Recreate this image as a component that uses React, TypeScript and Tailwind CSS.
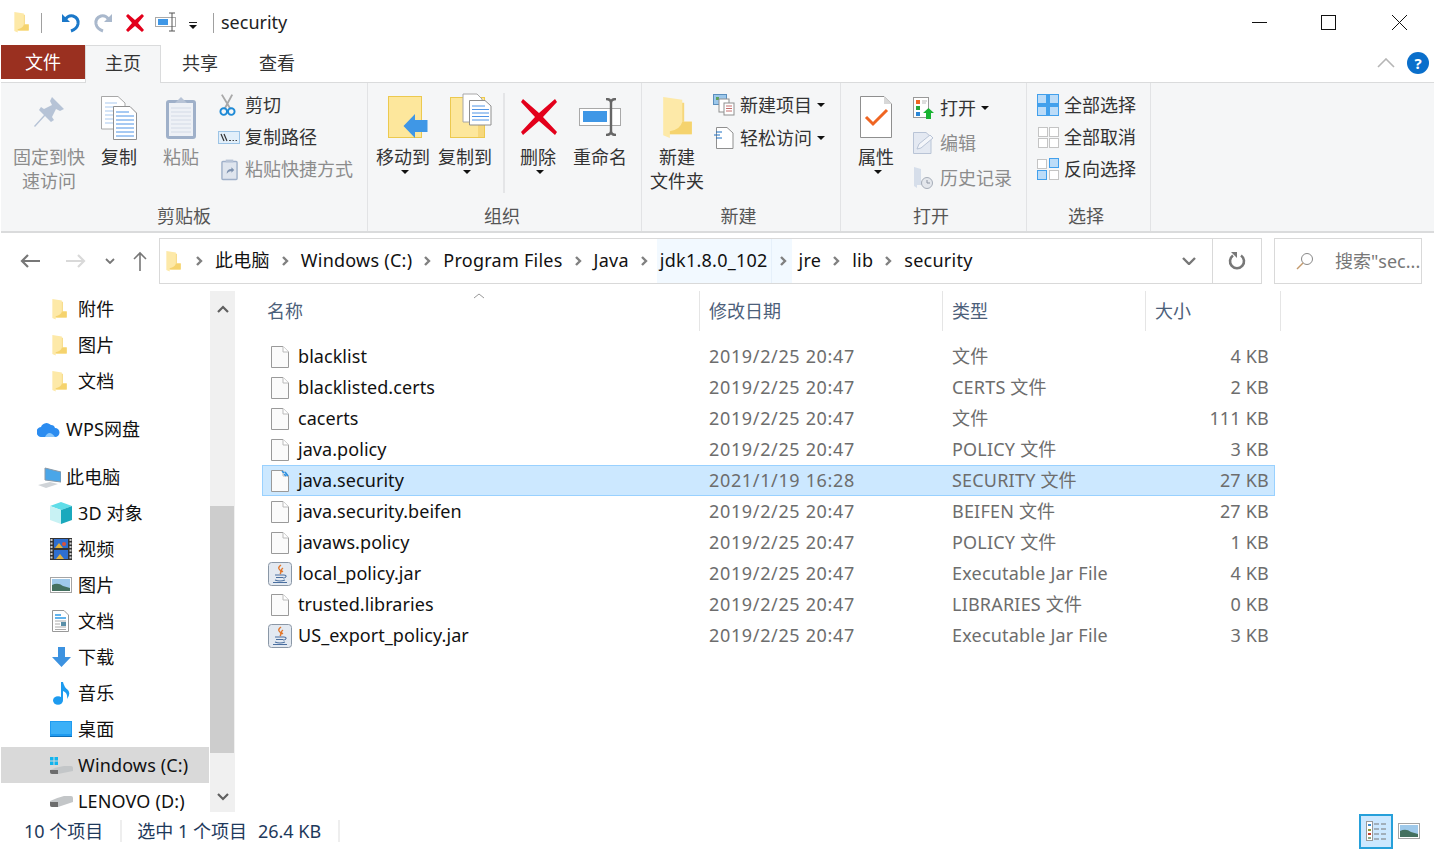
import type { ReactNode } from "react";

const font = "font-['Noto_Sans','Noto_Sans_CJK_SC',sans-serif]";

function Folder({ className }: { className: string }) {
  return (
    <svg viewBox="0 0 15 22" className={className}>
      <path d="M5 3 H11 V13 H15 V19 H5 Z" fill="#f6d77c" />
      <path d="M0 0 L10 1.5 V13 H15 V19.5 H3.5 L3.5 21.5 L0 20 Z" fill="#fde9a8" />
      <path d="M10 13 H15 V19.5 H3.5 V18 Q9 17 10 13 Z" fill="#f5d36e" />
    </svg>
  );
}

function Pages({ className }: { className: string }) {
  return (
    <svg viewBox="0 0 36 44" className={className}>
      <path d="M.5.5 H17 L24 7 V33 H.5 Z" fill="#fff" stroke="#a8a8a8" />
      <path d="M4 7 H16 M4 11 H20 M4 15 H20 M4 19 H20 M4 23 H20 M4 27 H20" stroke="#a9c9ef" />
      <path d="M12.5 10.5 H29 L35.5 17 V43.5 H12.5 Z" fill="#fff" stroke="#8f8f8f" />
      <path d="M15 16 H28 M15 20 H33 M15 24 H33 M15 28 H33 M15 32 H33 M15 36 H33 M15 40 H33" stroke="#4f94e6" />
    </svg>
  );
}

function Clipboard({ className }: { className: string }) {
  return (
    <svg viewBox="0 0 32 44" className={className}>
      <rect x="1" y="4" width="30" height="39" rx="3" fill="#9fb0c9" />
      <rect x="4" y="7" width="24" height="33" fill="#eef1f6" />
      <path d="M6 12 H26 M6 16 H26 M6 20 H26 M6 24 H26 M6 28 H26 M6 32 H26 M6 36 H26" stroke="#d3dae6" />
      <path d="M10 7 L13 4 L16 1 L19 4 L22 7 Z" fill="#b7c3d6" />
    </svg>
  );
}

function Caret({ className = "" }: { className?: string }) {
  return (
    <svg viewBox="0 0 8 4" className={`h-[4px] w-[8px] ${className}`}>
      <path d="M0 0 H8 L4 4 Z" fill="#111" />
    </svg>
  );
}

function LargeButton({
  icon,
  lines,
  width,
  caret,
  disabled,
}: {
  icon: ReactNode;
  lines: string[];
  width: string;
  caret?: boolean;
  disabled?: boolean;
}) {
  return (
    <div className={`flex flex-col items-center ${width}`}>
      <div className="flex h-[62px] w-full items-start justify-center pt-[13px]">{icon}</div>
      {lines.map((l) => (
        <div key={l} className={`h-[24px] whitespace-nowrap text-[18px] leading-[24px] ${disabled ? "text-[#8c8c8c]" : "text-[#333]"}`}>
          {l}
        </div>
      ))}
      {caret && <Caret className="ml-[3px] mt-[1px]" />}
    </div>
  );
}

function SmallButton({
  icon,
  label,
  caret,
  disabled,
  height = "h-[32px]",
}: {
  icon: ReactNode;
  label: string;
  caret?: boolean;
  disabled?: boolean;
  height?: string;
}) {
  return (
    <div className={`flex items-center ${height}`}>
      <div className="flex w-[27px] shrink-0 items-center justify-start">{icon}</div>
      <span className={`whitespace-nowrap text-[18px] leading-[24px] ${disabled ? "text-[#8c8c8c]" : "text-[#333]"}`}>{label}</span>
      {caret && <Caret className="ml-[5px]" />}
    </div>
  );
}

function Group({ label, width, labelPad = "", children }: { label: string; width: string; labelPad?: string; children: ReactNode }) {
  return (
    <div className={`flex h-full shrink-0 flex-col border-r border-[#e2e3e5] ${width}`}>
      <div className="flex flex-1">{children}</div>
      <div className={`h-[30px] text-center text-[18px] leading-[30px] text-[#555] ${labelPad}`}>{label}</div>
    </div>
  );
}

function SelectIcon({ kind }: { kind: "all" | "none" | "invert" }) {
  const on = "#bcdcf8";
  const blue = "#42a0ec";
  const gray = "#c4c4c4";
  const cell = (x: number, y: number, active: boolean) => (
    <rect x={x + 0.5} y={y + 0.5} width="9" height="9" fill={active ? on : "#fff"} stroke={active ? blue : gray} />
  );
  return (
    <svg viewBox="0 0 22 22" className="h-[22px] w-[22px]">
      {kind === "all" && (
        <>
          {cell(0, 0, true)}
          {cell(12, 0, true)}
          {cell(0, 12, true)}
          {cell(12, 12, true)}
          <path d="M11 0 V22 M0 11 H22" stroke={blue} strokeWidth="2" />
        </>
      )}
      {kind === "none" && (
        <>
          {cell(1, 1, false)}
          {cell(12, 1, false)}
          {cell(1, 12, false)}
          {cell(12, 12, false)}
        </>
      )}
      {kind === "invert" && (
        <>
          {cell(0, 1, false)}
          {cell(12, 0, true)}
          {cell(0, 12, true)}
          {cell(12, 12, false)}
        </>
      )}
    </svg>
  );
}

function Ribbon() {
  return (
    <div className="mx-[1px] flex h-[151px] border-y border-b-2 border-[#dadbdc] bg-[#f5f6f7]">
      <Group label="剪贴板" width="w-[367px]">
        <div className="flex pl-[12px]">
          <LargeButton
            width="w-[72px]"
            disabled
            lines={["固定到快", "速访问"]}
            icon={
              <svg viewBox="0 0 32 32" className="h-[32px] w-[32px]">
                <path d="M19 1 L31 13 L27 15 L23 13 L19 21 L21 24 L18 26 L12 20 L2 31 L1 30 L11 19 L6 14 L8 11 L11 13 L19 9 L17 5 Z" fill="#b6c3d6" />
              </svg>
            }
          />
          <LargeButton width="w-[68px]" lines={["复制"]} icon={<Pages className="h-[44px] w-[36px]" />} />
          <LargeButton width="w-[56px]" disabled lines={["粘贴"]} icon={<Clipboard className="h-[44px] w-[32px]" />} />
          <div className="ml-[9px] flex flex-col pt-[6px]">
            <SmallButton
              label="剪切"
              icon={
                <svg viewBox="0 0 18 24" className="ml-[1px] h-[24px] w-[17px]">
                  <path d="M3 1 L12 16 M14 1 L6 16" stroke="#a9a9a9" strokeWidth="2" fill="none" />
                  <circle cx="5" cy="19" r="3.5" fill="none" stroke="#1e8ad6" strokeWidth="2" />
                  <circle cx="13" cy="19" r="3.5" fill="none" stroke="#1e8ad6" strokeWidth="2" />
                </svg>
              }
            />
            <SmallButton
              label="复制路径"
              icon={
                <svg viewBox="0 0 22 13" className="h-[13px] w-[22px]">
                  <rect x=".5" y=".5" width="21" height="12" fill="#e2effa" stroke="#9cc4e6" />
                  <path d="M3 3 L6 10 M6 3 L9 10" stroke="#333" strokeWidth="1.2" />
                  <path d="M11 9.5 H13 M14.5 9.5 H16 M17.5 9.5 H19" stroke="#444" />
                </svg>
              }
            />
            <SmallButton
              label="粘贴快捷方式"
              disabled
              icon={
                <svg viewBox="0 0 18 23" className="ml-[3px] h-[23px] w-[17px]">
                  <rect x="1" y="3" width="16" height="19" rx="1" fill="#dfe5ee" stroke="#9fb0c9" strokeWidth="1.5" />
                  <rect x="5" y="1" width="8" height="3" fill="#b7c3d6" />
                  <path d="M6 16 Q6 11 11 11 V9 L14 12 L11 15 V13 Q8 13 6 16 Z" fill="#7f93b0" />
                </svg>
              }
            />
          </div>
        </div>
      </Group>
      <Group label="组织" width="w-[274px]" labelPad="pr-[5px]">
        <div className="flex pl-[8px]">
          <LargeButton
            width="w-[54px]"
            caret
            lines={["移动到"]}
            icon={
              <svg viewBox="0 0 40 44" className="ml-[10px] h-[44px] w-[40px] shrink-0">
                <rect x=".5" y=".5" width="33" height="41" fill="#fde79c" stroke="#ecc94f" />
                <path d="M39.5 24 H27 V18 L15.5 30 L27 42 V36 H39.5 Z" fill="#3f97e6" />
              </svg>
            }
          />
          <LargeButton
            width="w-[70px]"
            caret
            lines={["复制到"]}
            icon={
              <svg viewBox="0 0 42 46" className="-mt-[3px] ml-[12px] h-[46px] w-[42px] shrink-0">
                <rect x=".5" y="4.5" width="34" height="40" fill="#fde79c" stroke="#ecc94f" />
                <rect x="28" y="30" width="6" height="14" fill="#f6d77c" />
                <path d="M13 1 H27 L32 6 V29 H13 Z" fill="#fff" stroke="#a8a8a8" />
                <path d="M19.5 7.5 H35 L41 13 V32 H19.5 Z" fill="#fff" stroke="#8f8f8f" />
                <path d="M22 13 H35 M22 16.5 H39 M22 20 H39 M22 23.5 H39 M22 27 H39" stroke="#4f94e6" />
              </svg>
            }
          />
          <div className="ml-[3px] mt-[10px] h-[100px] w-[2px] bg-[#e4e5e7]" />
          <LargeButton
            width="w-[66px]"
            caret
            lines={["删除"]}
            icon={
              <svg viewBox="0 0 38 38" className="ml-[2px] mt-[2px] h-[38px] w-[38px] shrink-0">
                <path d="M3 1 L19 15 L35 1 L37 4 L23 19 L37 34 L35 37 L19 23 L3 37 L1 34 L15 19 L1 4 Z" fill="#e3001b" />
              </svg>
            }
          />
          <LargeButton
            width="w-[58px]"
            lines={["重命名"]}
            icon={
              <svg viewBox="0 0 42 38" className="mt-[2px] h-[38px] w-[42px] shrink-0">
                <rect x=".5" y="10.5" width="41" height="17" fill="#fff" stroke="#a9a9a9" />
                <rect x="4" y="13" width="24" height="11" fill="#3f97e6" />
                <path d="M27 1 Q32 1 32 5 V33 Q32 37 37 37 M37 1 Q32 1 32 5 M32 33 Q32 37 27 37" stroke="#666" strokeWidth="2.4" fill="none" />
              </svg>
            }
          />
        </div>
      </Group>
      <Group label="新建" width="w-[199px]" labelPad="pr-[5px]">
        <div className="flex pl-[8px]">
          <LargeButton width="w-[54px]" lines={["新建", "文件夹"]} icon={<Folder className="mt-[1px] h-[42px] w-[29px]" />} />
          <div className="ml-[9px] flex flex-col pt-[6px]">
            <SmallButton
              label="新建项目"
              caret
              icon={
                <svg viewBox="0 0 22 22" className="h-[22px] w-[22px]">
                  <rect x=".5" y=".5" width="13" height="10" fill="#9cc7ea" stroke="#5b8fbd" />
                  <rect x="3" y="3" width="3" height="3" fill="#5da35d" />
                  <rect x="6" y="5" width="10" height="13" fill="#fff" stroke="#8f8f8f" />
                  <rect x="11" y="9" width="10" height="12" fill="#fff" stroke="#8f8f8f" />
                  <path d="M13 12 H19 M13 14.5 H19 M13 17 H19" stroke="#c56e6e" />
                </svg>
              }
            />
            <SmallButton
              label="轻松访问"
              caret
              height="h-[34px]"
              icon={
                <svg viewBox="0 0 21 22" className="h-[22px] w-[21px]">
                  <path d="M3.5 .5 H14 L20 6 V21.5 H3.5 Z" fill="#fff" stroke="#8f8f8f" />
                  <path d="M3 5 H9 M1 8 H7 M3 11 H9" stroke="#1b6fc2" />
                </svg>
              }
            />
          </div>
        </div>
      </Group>
      <Group label="打开" width="w-[186px]" labelPad="pr-[5px]">
        <div className="flex pl-[13px]">
          <LargeButton
            width="w-[44px]"
            caret
            lines={["属性"]}
            icon={
              <svg viewBox="0 0 32 42" className="h-[42px] w-[32px]">
                <path d="M.5.5 H24 L31.5 8 V41.5 H.5 Z" fill="#fff" stroke="#8f8f8f" />
                <path d="M24 .5 V8 H31.5 Z" fill="#d8d8d8" />
                <path d="M6 21 L13 28 L27 14" stroke="#ef6522" strokeWidth="3" fill="none" />
              </svg>
            }
          />
          <div className="ml-[15px] flex flex-col pt-[7px]">
            <SmallButton
              label="打开"
              caret
              height="h-[35px]"
              icon={
                <svg viewBox="0 0 21 22" className="h-[22px] w-[21px]">
                  <rect x=".5" y=".5" width="15" height="20" fill="#fff" stroke="#999" />
                  <rect x="3" y="3" width="4" height="4" fill="#ef6522" />
                  <rect x="3" y="9" width="4" height="4" fill="#27a53a" />
                  <rect x="3" y="15" width="4" height="4" fill="#2a86d6" />
                  <path d="M9 4 H14 M9 6 H13" stroke="#bbb" />
                  <path d="M15.5 11 L21 16 H18 V22 H13 V16 H10 Z" fill="#19b332" />
                </svg>
              }
            />
            <SmallButton
              label="编辑"
              disabled
              height="h-[35px]"
              icon={
                <svg viewBox="0 0 21 22" className="h-[22px] w-[21px]">
                  <path d="M.5 .5 H13 L18 5 V21.5 H.5 Z" fill="#e4e9f2" stroke="#b9c4d6" />
                  <path d="M4 17 L6 12 L17 3 L20 6 L8 16 Z" fill="#f4f6fa" stroke="#b9c4d6" />
                </svg>
              }
            />
            <SmallButton
              label="历史记录"
              disabled
              height="h-[35px]"
              icon={
                <svg viewBox="0 0 21 22" className="h-[22px] w-[21px]">
                  <path d="M1 0 L8 2 V14 H12 V18 H4 V21 L1 19 Z" fill="#d6deea" />
                  <circle cx="14" cy="16" r="5.5" fill="#e4e7ec" stroke="#a6adb8" />
                  <path d="M14 13 V16 H17" stroke="#8e96a3" fill="none" />
                </svg>
              }
            />
          </div>
        </div>
      </Group>
      <Group label="选择" width="w-[124px]" labelPad="pr-[5px]">
        <div className="flex flex-col pl-[10px] pt-[6px]">
          <SmallButton label="全部选择" icon={<SelectIcon kind="all" />} />
          <SmallButton label="全部取消" icon={<SelectIcon kind="none" />} />
          <SmallButton label="反向选择" icon={<SelectIcon kind="invert" />} />
        </div>
      </Group>
    </div>
  );
}

function TitleBar() {
  return (
    <div className="flex h-[45px] items-center pl-[14px]">
      <Folder className="h-[21px] w-[15px]" />
      <div className="ml-[12px] h-[20px] w-px bg-[#a0a0a0]" />
      <svg viewBox="0 0 20 21" className="ml-[19px] h-[21px] w-[20px]">
        <path d="M4 8 Q7 3 12 4 Q18 6 17 12 Q16 17 10 19" stroke="#1b78c9" strokeWidth="3" fill="none" />
        <path d="M1 2 L9 10 H1 Z" fill="#1b78c9" />
      </svg>
      <svg viewBox="0 0 20 21" className="ml-[12px] h-[21px] w-[20px]">
        <path d="M16 8 Q13 3 8 4 Q2 6 3 12 Q4 17 10 19" stroke="#a9b8cc" strokeWidth="3" fill="none" />
        <path d="M19 2 L11 10 H19 Z" fill="#a9b8cc" />
      </svg>
      <svg viewBox="0 0 20 20" className="ml-[12px] h-[20px] w-[20px]">
        <path d="M3 1 L10 7 L17 1 L19 3 L13 10 L19 17 L17 19 L10 13 L3 19 L1 17 L7 10 L1 3 Z" fill="#e3001b" />
      </svg>
      <svg viewBox="0 0 23 21" className="ml-[10px] h-[21px] w-[23px]">
        <rect x=".5" y="5.5" width="20" height="9" fill="#fff" stroke="#a9a9a9" />
        <rect x="3" y="7" width="10" height="6" fill="#3f97e6" />
        <path d="M14 1 H20 M17 1 V19 M14 19 H20" stroke="#555" />
      </svg>
      <div className="ml-[11px] flex flex-col items-center gap-[2px] pt-[5px]">
        <div className="h-px w-[8px] bg-[#222]" />
        <Caret />
      </div>
      <div className="ml-[16px] h-[20px] w-px bg-[#a0a0a0]" />
      <span className="mb-[1px] ml-[7px] text-[18px] leading-[24px] text-[#222]">security</span>
      <div className="ml-auto flex items-center pr-[28px]">
        <div className="h-px w-[15px] bg-[#111]" />
        <div className="ml-[54px] h-[15px] w-[15px] border border-[#111]" />
        <svg viewBox="0 0 15 15" className="ml-[56px] h-[15px] w-[15px]">
          <path d="M0 0 L15 15 M15 0 L0 15" stroke="#111" />
        </svg>
      </div>
    </div>
  );
}

function Tabs() {
  return (
    <div className="flex h-[37px] items-start pl-[1px]">
      <div className="h-[34px] w-[84px] bg-[#9a3020] text-center text-[18px] leading-[34px] text-white">文件</div>
      <div className="relative z-10 h-[38px] w-[76px] border-x border-t border-[#dadbdc] bg-[#f5f6f7] text-center text-[18px] leading-[35px] text-[#333]">
        主页
      </div>
      <div className="w-[78px] text-center text-[18px] leading-[36px] text-[#333]">共享</div>
      <div className="w-[76px] text-center text-[18px] leading-[36px] text-[#333]">查看</div>
      <div className="ml-auto flex items-center pr-[6px] pt-[7px]">
        <svg viewBox="0 0 18 10" className="h-[10px] w-[18px]">
          <path d="M1 9 L9 1 L17 9" stroke="#b5b5b5" strokeWidth="1.6" fill="none" />
        </svg>
        <div className="ml-[12px] flex h-[22px] w-[22px] items-center justify-center rounded-full bg-[#0a6fcb] text-[15px] font-bold leading-none text-white">
          ?
        </div>
      </div>
    </div>
  );
}

function ChevronGlyph() {
  return (
    <svg viewBox="0 0 7 10" className="h-[10px] w-[7px] shrink-0">
      <path d="M1 1 L5 5 L1 9" stroke="#808080" strokeWidth="2.4" fill="none" />
    </svg>
  );
}

function AddressRow() {
  const crumbs = ["此电脑", "Windows (C:)", "Program Files", "Java", "jdk1.8.0_102", "jre", "lib", "security"];
  return (
    <div className="mt-[5px] flex h-[46px]">
      <div className="flex w-[159px] items-center text-[#777]">
        <svg viewBox="0 0 20 16" className="ml-[20px] h-[16px] w-[20px]">
          <path d="M20 8 H2 M8 2 L2 8 L8 14" stroke="#777" strokeWidth="2.2" fill="none" />
        </svg>
        <svg viewBox="0 0 20 16" className="ml-[26px] h-[16px] w-[20px]">
          <path d="M0 8 H18 M12 2 L18 8 L12 14" stroke="#d9d9d9" strokeWidth="2.2" fill="none" />
        </svg>
        <svg viewBox="0 0 10 6" className="ml-[19px] h-[6px] w-[10px]">
          <path d="M1 1 L5 5 L9 1" stroke="#777" strokeWidth="1.8" fill="none" />
        </svg>
        <svg viewBox="0 0 16 20" className="ml-[17px] h-[20px] w-[16px]">
          <path d="M8 20 V2 M2 8 L8 2 L14 8" stroke="#777" strokeWidth="1.6" fill="none" />
        </svg>
      </div>
      <div className="flex w-[1103px] items-center border border-[#d9d9d9]">
        <Folder className="ml-[6px] h-[21px] w-[15px] shrink-0" />
        <div className="ml-[6px] flex h-full">
          {crumbs.map((c, i) => (
            <div key={c} className="flex h-full">
              {i === 5 ? (
                <div className="mr-[4px] flex h-full w-[21px] items-center border-l border-[#e6f0fa] bg-[#f2f9ff] pl-[8px]">
                  <ChevronGlyph />
                </div>
              ) : (
                <div className="flex h-full w-[25px] items-center justify-center">
                  <ChevronGlyph />
                </div>
              )}
              <div className={`flex h-full items-center whitespace-nowrap px-[3px] pb-[2px] text-[18px] leading-[24px] tracking-[0.25px] text-[#111] ${i === 4 ? "bg-[#f2f9ff]" : ""}`}>
                {c}
              </div>
            </div>
          ))}
        </div>
        <div className="ml-auto flex h-full items-center">
          <svg viewBox="0 0 14 8" className="mr-[16px] h-[8px] w-[14px]">
            <path d="M1 1 L7 7 L13 1" stroke="#777" strokeWidth="2.4" fill="none" />
          </svg>
          <div className="flex h-full w-[49px] items-center justify-center border-l border-[#d9d9d9]">
            <svg viewBox="0 0 18 18" className="h-[18px] w-[18px]">
              <path d="M5 3.5 A7 7 0 1 0 13 3.5" stroke="#777" strokeWidth="2.6" fill="none" />
              <path d="M3 0 H9 V6 Z" fill="#777" />
            </svg>
          </div>
        </div>
      </div>
      <div className="ml-[12px] flex w-[148px] items-center overflow-hidden border border-[#d9d9d9] pl-[21px]">
        <svg viewBox="0 0 18 18" className="h-[18px] w-[18px] shrink-0">
          <circle cx="11" cy="7" r="5.5" stroke="#888" fill="none" />
          <path d="M7 11 L1 17" stroke="#c49a6c" strokeWidth="1.4" />
        </svg>
        <span className="ml-[21px] whitespace-nowrap text-[18px] leading-[24px] text-[#777]">搜索"sec...</span>
      </div>
    </div>
  );
}

const navFolder = <Folder className="h-[21px] w-[15px]" />;

type NavItem = { label: string; icon: ReactNode; pad: string; labelGap: string; extra?: string; active?: boolean };

const navItems: NavItem[] = [
  { label: "附件", icon: navFolder, pad: "pl-[51px]", labelGap: "ml-[11px]" },
  { label: "图片", icon: navFolder, pad: "pl-[51px]", labelGap: "ml-[11px]" },
  { label: "文档", icon: navFolder, pad: "pl-[51px]", labelGap: "ml-[11px]" },
  {
    label: "WPS网盘",
    pad: "pl-[36px]",
    labelGap: "ml-[6px]",
    extra: "mt-[12px]",
    icon: (
      <svg viewBox="0 0 23 16" className="h-[16px] w-[23px]">
        <path d="M5 16 A5 5 0 0 1 4 6 A6 6 0 0 1 14 4 A4 4 0 0 1 18 7 A4.5 4.5 0 0 1 18 16 Z" fill="#2b8cf0" />
        <path d="M8 16 Q12 8 18 16 Z" fill="#8cc8fb" />
      </svg>
    ),
  },
  {
    label: "此电脑",
    pad: "pl-[37px]",
    labelGap: "ml-[5px]",
    extra: "mt-[12px]",
    icon: (
      <svg viewBox="0 0 23 21" className="h-[21px] w-[23px]">
        <path d="M7 1 L23 5 V15 L7 13 Z" fill="#4aa6e8" stroke="#8a98a6" />
        <path d="M0 18 L12 15 L20 17 L8 21 Z" fill="#d0d4d8" />
      </svg>
    ),
  },
  {
    label: "3D 对象",
    pad: "pl-[49px]",
    labelGap: "ml-[6px]",
    icon: (
      <svg viewBox="0 0 22 22" className="h-[22px] w-[22px]">
        <path d="M11 0 L22 4 L11 8 L0 4 Z" fill="#5fdde8" />
        <path d="M0 4 L11 8 V22 L0 18 Z" fill="#c8f2f4" />
        <path d="M22 4 L11 8 V22 L22 18 Z" fill="#1aa9bd" />
      </svg>
    ),
  },
  {
    label: "视频",
    pad: "pl-[49px]",
    labelGap: "ml-[6px]",
    icon: (
      <svg viewBox="0 0 22 22" className="h-[22px] w-[22px]">
        <rect width="22" height="22" fill="#333" />
        <path d="M1.5 1 V21 M20.5 1 V21" stroke="#ccc" strokeWidth="2" strokeDasharray="2 1.5" />
        <rect x="4" y="1" width="14" height="9" fill="#2f6fd0" />
        <rect x="4" y="12" width="14" height="9" fill="#2f6fd0" />
        <path d="M5 10 L9 5 L13 10 Z M6 21 L10 16 L14 21 Z" fill="#e2b23c" />
        <circle cx="14" cy="6" r="2" fill="#d8513c" />
      </svg>
    ),
  },
  {
    label: "图片",
    pad: "pl-[49px]",
    labelGap: "ml-[6px]",
    icon: (
      <svg viewBox="0 0 22 16" className="h-[16px] w-[22px]">
        <rect x=".5" y=".5" width="21" height="15" fill="#fff" stroke="#a5a5a5" />
        <rect x="2" y="2" width="18" height="12" fill="#9fc9ea" />
        <path d="M2 8 Q8 5 13 9 L20 11 V14 H2 Z" fill="#44705f" />
      </svg>
    ),
  },
  {
    label: "文档",
    pad: "pl-[51px]",
    labelGap: "ml-[9px]",
    icon: (
      <svg viewBox="0 0 17 22" className="h-[22px] w-[17px]">
        <path d="M.5 .5 H12 L16.5 5 V21.5 H.5 Z" fill="#fff" stroke="#999" />
        <path d="M3 5 H9 M3 8 H14" stroke="#2f9be6" strokeWidth="1.4" />
        <path d="M3 11 H14 M3 14 H8 M3 17 H14 M3 19.5 H14" stroke="#aaa" />
        <rect x="9" y="12" width="5" height="4" fill="#5a8fa8" />
      </svg>
    ),
  },
  {
    label: "下载",
    pad: "pl-[51px]",
    labelGap: "ml-[7px]",
    icon: (
      <svg viewBox="0 0 19 20" className="h-[20px] w-[19px]">
        <path d="M6 0 H13 V10 H19 L9.5 20 L0 10 H6 Z" fill="#3c92e0" />
      </svg>
    ),
  },
  {
    label: "音乐",
    pad: "pl-[52px]",
    labelGap: "ml-[8px]",
    icon: (
      <svg viewBox="0 0 17 23" className="h-[23px] w-[17px]">
        <ellipse cx="5" cy="18.5" rx="5" ry="4.2" fill="#1d9bef" />
        <path d="M8 0 H10 Q11 5 15 8 Q18 12 14 17 Q15 11 10 9 V18 H8 Z" fill="#1d9bef" />
      </svg>
    ),
  },
  {
    label: "桌面",
    pad: "pl-[49px]",
    labelGap: "ml-[6px]",
    icon: (
      <svg viewBox="0 0 22 16" className="h-[16px] w-[22px]">
        <rect width="22" height="16" fill="#1f9bf0" />
        <rect x="1" y="1" width="20" height="12" fill="#3cb0f7" />
        <path d="M0 15.5 H22" stroke="#0e6fb8" />
      </svg>
    ),
  },
  {
    label: "Windows (C:)",
    pad: "pl-[49px]",
    labelGap: "ml-[5px]",
    active: true,
    icon: (
      <svg viewBox="0 0 23 17" className="h-[17px] w-[23px]">
        <path d="M0 0 H3.5 V3.5 H0 Z M4.5 0 H8 V3.5 H4.5 Z M0 4.5 H3.5 V8 H0 Z M4.5 4.5 H8 V8 H4.5 Z" fill="#12b4ee" />
        <path d="M0 13 Q6 10 14 9 H21 Q23 9 23 11 V14 L8 17 H2 Q0 17 0 15 Z" fill="#c3c6c8" />
        <path d="M0 13 H8 V17 H2 Q0 17 0 15 Z" fill="#6c6c6c" />
      </svg>
    ),
  },
  {
    label: "LENOVO (D:)",
    pad: "pl-[49px]",
    labelGap: "ml-[5px]",
    icon: (
      <svg viewBox="0 0 23 11" className="h-[11px] w-[23px]">
        <path d="M0 5 Q6 2 14 0 H21 Q23 0 23 2 V6 L8 11 H2 Q0 11 0 9 Z" fill="#c3c6c8" />
        <path d="M0 6 H8 V11 H2 Q0 11 0 9 Z" fill="#6c6c6c" />
      </svg>
    ),
  },
];

function NavPane() {
  return (
    <div className="flex h-full w-[236px] shrink-0 overflow-hidden">
      <div className="w-[209px] shrink-0">
        {navItems.map((n) => (
          <div
            key={n.label + n.pad}
            className={`ml-[1px] flex h-[36px] items-center ${n.pad} ${n.extra ?? ""} ${n.active ? "bg-[#d9d9d9]" : ""}`}
          >
            <div className="flex shrink-0 items-center">{n.icon}</div>
            <span className={`${n.labelGap} whitespace-nowrap text-[18px] leading-[24px] tracking-[0.15px] text-[#111]`}>{n.label}</span>
          </div>
        ))}
      </div>
      <div className="ml-[1px] flex h-full w-[25px] shrink-0 flex-col bg-[#f0f0f0]">
        <div className="flex h-[36px] items-center justify-center">
          <svg viewBox="0 0 12 8" className="h-[8px] w-[12px]">
            <path d="M1 7 L6 2 L11 7" stroke="#606060" strokeWidth="2.2" fill="none" />
          </svg>
        </div>
        <div className="mt-[179px] h-[247px] w-[24px] bg-[#cdcdcd]" />
        <div className="mt-auto flex h-[26px] items-start justify-center pt-[7px]">
          <svg viewBox="0 0 12 8" className="h-[8px] w-[12px]">
            <path d="M1 1 L6 6 L11 1" stroke="#606060" strokeWidth="2.2" fill="none" />
          </svg>
        </div>
      </div>
    </div>
  );
}

function PageIcon({ marked }: { marked?: boolean }) {
  return (
    <svg viewBox="0 0 18 22" className="ml-[8px] h-[22px] w-[18px] shrink-0">
      <path d="M.5 .5 H12 L17.5 6 V21.5 H.5 Z" fill="#fbfbfb" stroke="#9a9a9a" />
      <path d="M12 .5 V6 H17.5" fill="#fff" stroke="#bbb" />
      {marked && <path d="M11 1 L13 3 M14 2 L17 6 M13 4 L15 6" stroke="#2b8fe0" strokeWidth="1.6" />}
    </svg>
  );
}

function JarIcon() {
  return (
    <svg viewBox="0 0 24 24" className="ml-[5px] mr-[-3px] h-[24px] w-[24px] shrink-0">
      <rect x=".5" y=".5" width="23" height="23" rx="3" fill="#e3e9f1" stroke="#8a97a6" />
      <path d="M13 3 Q9 6 12 8 Q14 10 12 12 M15 6 Q12 8 15 10" stroke="#e2762a" strokeWidth="1.4" fill="none" />
      <path d="M7 13 H16 M8 15.5 H15 M7 18 Q12 20 17 18 M5 20.5 H19" stroke="#4a6fa0" strokeWidth="1.2" fill="none" />
      <path d="M16 13 Q19 13 18 15 Q17 16 15 16" stroke="#4a6fa0" fill="none" />
    </svg>
  );
}

const files = [
  { name: "blacklist", date: "2019/2/25 20:47", type: "文件", size: "4 KB" },
  { name: "blacklisted.certs", date: "2019/2/25 20:47", type: "CERTS 文件", size: "2 KB" },
  { name: "cacerts", date: "2019/2/25 20:47", type: "文件", size: "111 KB" },
  { name: "java.policy", date: "2019/2/25 20:47", type: "POLICY 文件", size: "3 KB" },
  { name: "java.security", date: "2021/1/19 16:28", type: "SECURITY 文件", size: "27 KB", selected: true },
  { name: "java.security.beifen", date: "2019/2/25 20:47", type: "BEIFEN 文件", size: "27 KB" },
  { name: "javaws.policy", date: "2019/2/25 20:47", type: "POLICY 文件", size: "1 KB" },
  { name: "local_policy.jar", date: "2019/2/25 20:47", type: "Executable Jar File", size: "4 KB", jar: true },
  { name: "trusted.libraries", date: "2019/2/25 20:47", type: "LIBRARIES 文件", size: "0 KB" },
  { name: "US_export_policy.jar", date: "2019/2/25 20:47", type: "Executable Jar File", size: "3 KB", jar: true },
];

function HeaderCell({ label, width }: { label: string; width: string }) {
  return <div className={`h-full border-r border-[#e5e5e5] pl-[9px] pt-[6px] text-[18px] leading-[28px] text-[#4c607a] ${width}`}>{label}</div>;
}

function FileList() {
  return (
    <div className="pl-[26px]">
      <div className="flex h-[40px]">
        <div className="relative h-full w-[438px] border-r border-[#e5e5e5] pl-[5px] pt-[6px] text-[18px] leading-[28px] text-[#4c607a]">
          名称
          <svg viewBox="0 0 12 6" className="absolute left-[211px] top-[2px] h-[6px] w-[12px]">
            <path d="M1 5 L6 1 L11 5" stroke="#999" fill="none" />
          </svg>
        </div>
        <HeaderCell label="修改日期" width="w-[243px]" />
        <HeaderCell label="类型" width="w-[203px]" />
        <HeaderCell label="大小" width="w-[135px]" />
      </div>
      <div className="w-[1013px] pt-[10px]">
        {files.map((f) => (
          <div
            key={f.name}
            className={`flex h-[31px] items-center border text-[18px] text-[#6d6d6d] ${f.selected ? "border-[#99d1ff] bg-[#cce8ff]" : "border-transparent"}`}
          >
            <div className="flex w-[437px] items-center">
              {f.jar ? <JarIcon /> : <PageIcon marked={f.selected} />}
              <span className="ml-[9px] whitespace-nowrap tracking-[0.06px] text-[#111]">{f.name}</span>
            </div>
            <div className="w-[243px] pl-[9px] tracking-[0.65px]">{f.date}</div>
            <div className="w-[203px] pl-[9px] tracking-[0.2px]">{f.type}</div>
            <div className="w-[123px] text-right tracking-[0.2px]">{f.size}</div>
          </div>
        ))}
      </div>
    </div>
  );
}

function StatusBar() {
  return (
    <div className="flex h-[38px] items-center text-[18px] text-[#1e395b]">
      <span className="ml-[24px] whitespace-nowrap">10 个项目</span>
      <div className="ml-[17px] h-[22px] w-[2px] bg-[#eeeeee]" />
      <span className="ml-[15px] whitespace-nowrap">选中 1 个项目</span>
      <span className="ml-[11px] whitespace-nowrap">26.4 KB</span>
      <div className="ml-[17px] h-[22px] w-[2px] bg-[#eeeeee]" />
      <div className="ml-auto flex items-center pr-[15px]">
        <div className="flex h-[35px] w-[34px] items-center justify-center border-2 border-[#26a0da] bg-[#cce8ff]">
          <svg viewBox="0 0 20 20" className="h-[20px] w-[20px]">
            <rect x=".5" y=".5" width="6" height="19" fill="#fff" stroke="#999" />
            <path d="M2 3 H5 V5 H2 Z" fill="#3d8bcb" />
            <path d="M2 8 H5 V10 H2 Z" fill="#8f9a3b" />
            <path d="M2 12 H5 V14 H2 Z" fill="#c0392b" />
            <path d="M2 16 H5 V18 H2 Z" fill="#8ba888" />
            <path d="M8 3 H13 M15 3 H20 M8 8 H13 M15 8 H20 M8 13 H13 M15 13 H20 M8 18 H13 M15 18 H20" stroke="#777" />
          </svg>
        </div>
        <svg viewBox="0 0 22 16" className="ml-[5px] h-[16px] w-[22px]">
          <rect x=".5" y=".5" width="21" height="15" fill="#fff" stroke="#a5a5a5" />
          <rect x="2" y="2" width="18" height="12" fill="#9fc9ea" />
          <path d="M2 8 Q8 5 13 9 L20 11 V14 H2 Z" fill="#44705f" />
        </svg>
      </div>
    </div>
  );
}

export default function App() {
  return (
    <div className={`h-[850px] w-[1435px] overflow-hidden bg-white ${font}`}>
      <TitleBar />
      <Tabs />
      <Ribbon />
      <AddressRow />
      <div className="mt-[7px] flex h-[521px]">
        <NavPane />
        <FileList />
      </div>
      <StatusBar />
    </div>
  );
}
